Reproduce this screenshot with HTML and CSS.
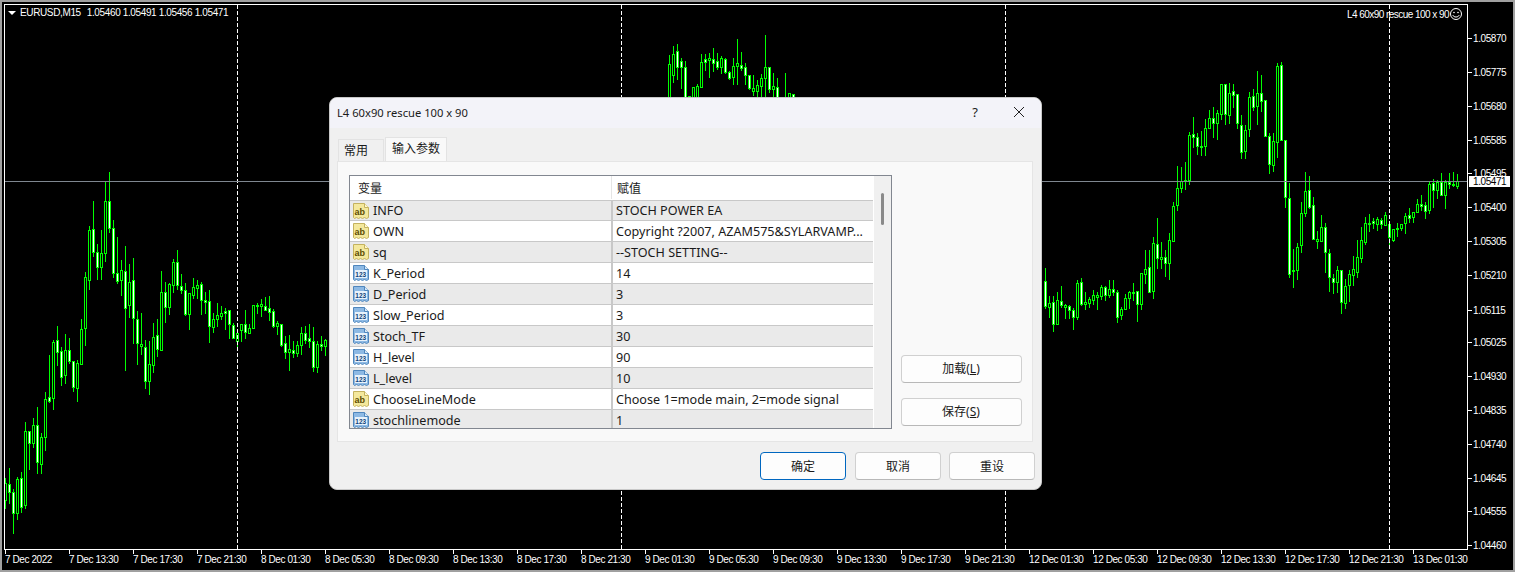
FILE: index.html
```html
<!DOCTYPE html>
<html lang="zh">
<head>
<meta charset="utf-8">
<title>EURUSD,M15</title>
<link rel="stylesheet" href="styles.css">
</head>
<body>
<svg class="defs" width="0" height="0" aria-hidden="true">
  <symbol id="ico-ab" viewBox="0 0 16 16">
    <path d="M.5.5H11.5L15.5 4.5V14.5L13.5 15.5 11.5 14.5 9.5 15.5 7.5 14.5 5.5 15.5 3.5 14.5 1.5 15.5 .5 14.5Z" fill="#f4e89c" stroke="#c4b25e"/>
    <path d="M11.5.5V4.5H15.5" fill="#fff8d0" stroke="#c4b25e"/>
    <text x="1.6" y="11.6" class="ico-ab-text">ab</text>
  </symbol>
  <symbol id="ico-num" viewBox="0 0 16 16">
    <path d="M.5.5H11.5L15.5 4.5V14.5L13.5 15.5 11.5 14.5 9.5 15.5 7.5 14.5 5.5 15.5 3.5 14.5 1.5 15.5 .5 14.5Z" fill="#8db9e4" stroke="#4f86bd"/>
    <path d="M11.5.5V4.5H15.5" fill="#d6e8f8" stroke="#4f86bd"/>
    <rect x="2" y="5" width="12" height="8" fill="#e8f2fb"/>
    <text x="2.3" y="11.6" class="ico-num-text">123</text>
  </symbol>
</svg>

<main class="terminal">
  <div class="chart" id="chart">
    <div class="chart-head">
      <span class="tri"></span>
      <span class="symbol">EURUSD,M15</span>
      <span class="ohlc">1.05460 1.05491 1.05456 1.05471</span>
    </div>
    <div class="ea-name">
      <span>L4 60x90 rescue 100 x 90</span>
      <svg class="smile" width="14" height="14" viewBox="0 0 14 14"><circle cx="7" cy="7" r="5.5" fill="none" stroke="#fff"/><circle cx="5" cy="5.5" r=".8" fill="#fff"/><circle cx="9" cy="5.5" r=".8" fill="#fff"/><path d="M3.8 8.2C4.8 10.6 9.2 10.6 10.2 8.2" fill="none" stroke="#fff"/></svg>
    </div>
  </div>
  <div class="time-axis">
    <span>7 Dec 2022</span><span>7 Dec 13:30</span><span>7 Dec 17:30</span><span>7 Dec 21:30</span>
    <span>8 Dec 01:30</span><span>8 Dec 05:30</span><span>8 Dec 09:30</span><span>8 Dec 13:30</span><span>8 Dec 17:30</span><span>8 Dec 21:30</span>
    <span>9 Dec 01:30</span><span>9 Dec 05:30</span><span>9 Dec 09:30</span><span>9 Dec 13:30</span><span>9 Dec 17:30</span><span>9 Dec 21:30</span>
    <span>12 Dec 01:30</span><span>12 Dec 05:30</span><span>12 Dec 09:30</span><span>12 Dec 13:30</span><span>12 Dec 17:30</span><span>12 Dec 21:30</span>
    <span>13 Dec 01:30</span>
  </div>
  <div class="price-axis" id="prices"></div>
</main>

<section class="dialog">
  <header class="title-bar">
    <span class="title">L4 60x90 rescue 100 x 90</span>
    <span class="help">?</span>
    <svg class="close" width="12" height="12" viewBox="0 0 12 12"><path d="M1 1L11 11M11 1L1 11" stroke="#222" fill="none"/></svg>
  </header>
  <div class="dialog-body">
    <div class="tabs">
      <span class="tab">常用</span>
      <span class="tab tab-active">输入参数</span>
    </div>
    <div class="panel">
      <div class="list">
        <div class="list-main">
          <div class="list-head"><span class="head-name">变量</span><span class="head-value">赋值</span></div>
          <div class="row odd"><span class="name"><svg class="ico"><use href="#ico-ab"/></svg>INFO</span><span class="value">STOCH POWER EA</span></div>
          <div class="row"><span class="name"><svg class="ico"><use href="#ico-ab"/></svg>OWN</span><span class="value">Copyright ?2007, AZAM575&amp;SYLARVAMP...</span></div>
          <div class="row odd"><span class="name"><svg class="ico"><use href="#ico-ab"/></svg>sq</span><span class="value">--STOCH SETTING--</span></div>
          <div class="row"><span class="name"><svg class="ico"><use href="#ico-num"/></svg>K_Period</span><span class="value">14</span></div>
          <div class="row odd"><span class="name"><svg class="ico"><use href="#ico-num"/></svg>D_Period</span><span class="value">3</span></div>
          <div class="row"><span class="name"><svg class="ico"><use href="#ico-num"/></svg>Slow_Period</span><span class="value">3</span></div>
          <div class="row odd"><span class="name"><svg class="ico"><use href="#ico-num"/></svg>Stoch_TF</span><span class="value">30</span></div>
          <div class="row"><span class="name"><svg class="ico"><use href="#ico-num"/></svg>H_level</span><span class="value">90</span></div>
          <div class="row odd"><span class="name"><svg class="ico"><use href="#ico-num"/></svg>L_level</span><span class="value">10</span></div>
          <div class="row"><span class="name"><svg class="ico"><use href="#ico-ab"/></svg>ChooseLineMode</span><span class="value">Choose 1=mode main, 2=mode signal</span></div>
          <div class="row odd"><span class="name"><svg class="ico"><use href="#ico-num"/></svg>stochlinemode</span><span class="value">1</span></div>
        </div>
        <div class="scrollbar"><span class="thumb"></span></div>
      </div>
      <div class="side-buttons">
        <button class="btn btn-side">加载(<u>L</u>)</button>
        <button class="btn btn-side">保存(<u>S</u>)</button>
      </div>
    </div>
    <footer class="footer">
      <button class="btn btn-foot btn-default">确定</button>
      <button class="btn btn-foot">取消</button>
      <button class="btn btn-foot">重设</button>
    </footer>
  </div>
</section>
<script src="chart.js"></script>
</body>
</html>
```
FILE: styles.css
```css
* { box-sizing: border-box; }
html, body { margin: 0; padding: 0; }
body { width: 1515px; height: 572px; overflow: hidden; background: #000; position: relative; font-family: "Noto Sans", "Noto Sans CJK SC", sans-serif; }
.defs { position: absolute; }
.ico-ab-text { font: bold 9px "Liberation Sans", sans-serif; fill: #5c4c00; }
.ico-num-text { font: bold 6.5px "Liberation Sans", sans-serif; fill: #12437a; }

.terminal { position: absolute; inset: 0; border: 2px solid #a0a0a0; background: #000; color: #fff; font-family: "Liberation Sans", sans-serif; font-size: 10px; letter-spacing: -0.42px; }
.chart { position: absolute; left: 2px; top: 2px; width: 1464px; height: 546px; border: 1px solid #fff; overflow: hidden; }
.chart svg.candles { position: absolute; left: 0; top: 0; }
.chart-head { position: absolute; left: 3px; top: 1px; display: flex; align-items: center; height: 13px; white-space: nowrap; z-index: 2; letter-spacing: -0.37px; }
.tri { width: 0; height: 0; border: solid transparent; border-width: 4px 4px 0; border-top-color: #fff; margin-right: 4px; }
.symbol { margin-right: 6px; }
.ea-name { position: absolute; right: 4px; top: 2px; height: 14px; display: flex; align-items: center; white-space: nowrap; z-index: 2; letter-spacing: -0.54px; }
.smile { display: block; }
.time-axis { position: absolute; left: 3px; top: 548px; display: grid; grid-template-columns: repeat(23, 64px); height: 18px; padding-top: 4px; white-space: nowrap; }
.time-axis span { position: relative; }
.time-axis span::before { content: ""; position: absolute; left: 0; top: -4px; width: 1px; height: 4px; background: #fff; }
.price-axis { position: absolute; left: 1471px; top: 0; }
.price { position: absolute; left: 0; line-height: 12px; }
.price::before { content: ""; position: absolute; left: -5px; top: 5px; width: 4px; height: 1px; background: #fff; }
.price-now { position: absolute; left: -4px; top: 174px; width: 41px; height: 11px; background: #fff; color: #000; line-height: 11px; padding-left: 4px; }

.dialog { position: absolute; left: 329px; top: 97px; width: 713px; height: 393px; border-radius: 8px; background: #f0f0f0; overflow: hidden; border: 1px solid #c8c8c8; color: #1a1a1a; font-size: 12px; z-index: 5; display: flex; flex-direction: column; }
.title-bar { height: 30px; background: #f3f3f9; display: flex; align-items: center; padding: 0 16px 2px 7px; flex: none; }
.title { flex: 1; font-size: 11.2px; }
.help { margin-right: 35px; font-size: 13px; }
.close { display: block; }
.dialog-body { flex: 1; padding: 9px 6px 0 7px; display: flex; flex-direction: column; }
.tabs { display: flex; align-items: flex-end; height: 24px; flex: none; padding-left: 1px; gap: 1px; }
.tab { width: 46px; height: 22px; background: #f0f0f0; border: 1px solid #e3e3e3; border-bottom: 0; display: flex; align-items: center; padding: 0 0 1px 5px; }
.tab-active { width: 62px; height: 24px; background: #f9f9f9; padding: 0 0 3px 6px; }
.panel { width: 696px; height: 281px; background: #f9f9f9; border: 1px solid #e5e5e5; padding: 13px 0 0 11px; display: flex; gap: 9px; flex: none; }
.list { width: 543px; height: 254px; border: 1px solid #828790; background: #fff; display: flex; overflow: hidden; flex: none; }
.list-main { width: 523px; overflow: hidden; flex: none; }
.list-head { display: grid; grid-template-columns: 262px 1fr; height: 25px; border-bottom: 1px solid #c8c8c8; background: #fff; align-items: center; padding-bottom: 1px; }
.head-name { padding-left: 8px; border-right: 1px solid #e5e5e5; height: 100%; display: flex; align-items: center; }
.head-value { padding-left: 5px; }
.row { display: grid; grid-template-columns: 263px 1fr; height: 21px; border-bottom: 1px solid #c8c8c8; background: #fff; align-items: stretch; white-space: nowrap; font-size: 12.6px; }
.list-head + .row { height: 20px; }
.row.odd { background: #eaeaea; }
.name { display: flex; align-items: center; border-right: 2px solid #c8c8c8; padding-left: 3px; gap: 4px; }
.value { display: flex; align-items: center; padding-left: 3px; overflow: hidden; }
.ico { width: 16px; height: 16px; flex: none; }
.scrollbar { flex: 1; background: #f0f0f0; position: relative; border-left: 1px solid #fff; }
.thumb { position: absolute; left: 7px; top: 17px; width: 3px; height: 32px; background: #8a8a8a; border-radius: 2px; }
.side-buttons { width: 121px; height: 254px; display: flex; flex-direction: column; justify-content: flex-end; gap: 15px; padding-bottom: 3px; flex: none; }
.btn { font: inherit; color: #1a1a1a; background: #fdfdfd; border: 1px solid #d0d0d0; border-bottom-color: #b8b8b8; border-radius: 4px; height: 28px; padding: 0; cursor: default; }
.btn-side { width: 121px; padding: 0 1px 2px 0; }
.footer { display: flex; justify-content: flex-end; gap: 8px; padding-top: 10px; width: 698px; }
.btn-foot { width: 86px; }
.btn-default { border-color: #0067c0; margin-right: 1px; }
```
FILE: chart.js
```js
// [x of first candle, then per-candle: high, low, bodyTop, bodyBottom, filled]
var groups = [
 [5,[478,508,483,500,0],[468,503,484,492,1],[489,533,492,513,1],[477,519,479,513,0],[472,512,478,507,1],[422,508,431,505,0],[431,469,431,443,1],[418,447,425,443,0],[407,473,425,462,1],[433,473,437,464,0],[392,450,399,437,0],[355,402,397,401,1],[340,409,342,398,0],[326,365,340,352,1],[347,385,351,377,1],[334,383,350,375,0],[338,363,350,361,1],[361,391,361,387,1],[360,401,363,388,0],[319,364,329,364,0],[272,345,277,328,0],[226,289,230,280,0],[201,256,229,252,1],[244,279,252,267,1],[230,279,253,267,0],[182,261,201,253,0],[172,232,201,228,1],[220,277,228,273,1],[237,283,273,281,1],[260,295,270,280,0],[246,370,271,308,1],[264,317,282,305,0],[258,343,280,318,1],[311,364,319,343,1],[313,354,344,346,0],[340,388,347,381,1],[341,394,364,381,0],[323,372,337,365,0],[319,356,335,349,1],[271,350,292,350,0],[282,322,292,307,1],[283,314,284,307,0],[259,292,262,285,0],[250,289,262,285,1],[274,293,286,290,1],[283,315,290,314,1],[293,329,293,314,0],[278,298,287,295,0],[280,298,285,288,0],[282,314,284,300,1],[292,313,300,302,1],[290,342,301,326,1],[313,332,319,327,0],[303,326,315,319,0],[306,319,313,316,0],[308,329,311,313,1],[310,338,310,324,1],[323,338,325,338,1],[333,347,333,341,0],[324,341,324,330,0],[310,338,324,332,1],[324,333,328,333,0],[305,328,305,328,0],[303,313,305,306,0],[299,316,304,306,0],[297,310,306,310,1],[296,320,308,312,1],[309,327,311,326,1],[321,334,323,326,0],[324,346,324,345,1],[336,358,343,352,1],[335,370,349,352,0],[341,357,350,353,1],[341,356,345,353,0],[327,354,333,345,0],[326,343,333,340,1],[324,347,338,341,1],[327,371,341,367,1],[341,372,344,367,0],[336,350,344,346,1],[339,355,340,346,0]],
 [669,[55,120,64,120,0],[46,82,54,75,0],[44,79,51,67,1],[58,88,61,67,1],[61,120,67,120,1],[96,120,96,120,0],[87,120,87,120,0],[84,120,86,120,0],[54,87,62,87,0],[54,70,59,62,1],[53,77,58,60,0],[48,71,59,63,1],[53,69,61,67,1],[56,73,58,67,0],[58,73,59,72,1],[71,79,72,78,1],[58,84,66,77,0],[39,84,63,66,0],[52,70,65,68,1],[63,84,67,75,1],[75,89,75,88,1],[75,95,88,91,0],[80,97,85,91,0],[74,97,78,86,0],[35,97,67,78,0],[67,92,67,89,1],[73,97,86,89,0],[78,120,87,120,1]],
 [785,[73,120,120,120,0],[93,120,93,120,0],[94,120,94,120,1]],
 [1045,[268,308,281,306,1],[296,317,303,307,0],[296,331,302,324,1],[292,324,300,324,0],[286,307,301,305,1],[304,318,305,307,0],[305,318,306,310,1],[308,329,310,317,1],[280,319,283,317,0],[278,305,282,304,1],[292,309,302,304,0],[297,307,299,303,0],[290,304,295,300,0],[292,309,295,297,0],[285,299,287,296,0],[286,300,287,295,1],[280,297,289,295,0],[280,295,289,292,1],[290,322,292,317,1],[307,319,309,315,0],[294,309,298,309,0],[291,308,292,298,0],[283,300,292,293,0],[291,321,291,304,1],[273,309,273,304,0],[250,283,269,274,0],[250,292,267,292,1],[237,298,243,291,0],[218,268,244,258,1],[242,268,257,259,0],[250,276,257,263,1],[233,279,240,263,0],[202,241,206,241,0],[166,210,188,205,0],[167,192,181,188,0],[162,189,180,181,0],[132,184,135,180,0],[117,147,134,137,1],[133,154,137,146,1],[131,155,146,147,0],[119,155,128,146,0],[110,128,118,128,0],[107,137,118,123,1],[110,139,113,123,0],[84,119,84,114,0],[84,124,84,114,1],[83,123,93,115,0],[84,107,91,95,1],[94,128,94,123,1],[115,158,125,152,1],[125,158,130,151,0],[92,136,97,129,0],[89,110,96,107,1],[71,124,93,106,0],[75,111,93,101,1],[100,136,100,136,1],[133,173,136,164,1],[133,171,141,165,0],[63,157,66,142,0],[62,140,65,140,1],[140,207,140,197,1],[183,277,198,274,1],[249,287,270,271,0],[243,279,247,270,0],[202,252,213,245,0],[172,216,191,213,0],[176,208,190,207,1],[197,239,205,239,1],[231,248,239,241,0],[215,241,227,241,0],[223,272,227,252,1],[249,291,253,277,1],[274,293,278,282,1],[266,292,270,282,0],[270,313,270,302,1],[279,308,286,303,0],[270,301,274,285,0],[256,285,269,275,0],[240,277,257,272,0],[227,262,240,258,0],[217,244,223,242,0],[214,231,223,224,0],[218,228,221,223,1],[217,230,219,224,0],[218,228,220,224,1],[212,225,215,225,0],[224,248,224,237,1],[229,241,229,240,0],[223,236,228,229,0],[224,230,224,228,0],[213,233,216,223,0],[208,222,215,218,1],[212,222,212,217,0],[199,212,204,212,0],[195,210,204,206,1],[202,218,205,211,1],[182,213,184,210,0],[179,207,183,190,1],[180,198,182,190,0],[173,195,182,195,1],[180,208,182,195,0],[173,188,182,184,1],[172,186,184,185,0],[174,188,181,186,0]]
];
var step = 4, out = [];
function rect(x, y, w, h, c) { out.push('<rect x="' + x + '" y="' + y + '" width="' + w + '" height="' + h + '" fill="' + c + '"/>'); }
// offsets: svg origin is the chart's padding box at (5,5) in the page
var ox = 5, oy = 5, G = '#00ff00';
groups.forEach(function (g) {
  g.slice(1).forEach(function (c, i) {
    var x = g[0] + i * step - ox;
    rect(x, c[0] - oy, 1, c[1] - c[0] + 1, G);
    var h = Math.max(c[3] - c[2] + 1, 2);
    rect(x - 1, c[2] - oy, 3, h, G);
    if (h > 2) rect(x, c[2] - oy + 1, 1, h - 2, c[4] ? '#fff' : '#000');
  });
});
// dashed period separators
[237, 621, 1005, 1389].forEach(function (x) {
  for (var y = 0; y < 544; y += 6) rect(x - ox, y, 1, 4, '#fff');
});
// current bid line
rect(0, 181 - oy, 1462, 1, '#7f8790');
var chart = document.getElementById('chart');
chart.insertAdjacentHTML('afterbegin', '<svg class="candles" width="1462" height="544" shape-rendering="crispEdges">' + out.join('') + '</svg>');

var prices = [['1.05870',38],['1.05775',72],['1.05680',106],['1.05585',140],['1.05495',173],['1.05400',207],['1.05305',241],['1.05210',275],['1.05115',310],['1.05025',342],['1.04930',376],['1.04835',410],['1.04740',444],['1.04645',478],['1.04555',511],['1.04460',545]];
var box = document.getElementById('prices');
box.innerHTML = prices.map(function (p) {
  return '<span class="price" style="top:' + (p[1] - 7) + 'px">' + p[0] + '</span>';
}).join('') + '<span class="price-now">1.05471</span>';
```
